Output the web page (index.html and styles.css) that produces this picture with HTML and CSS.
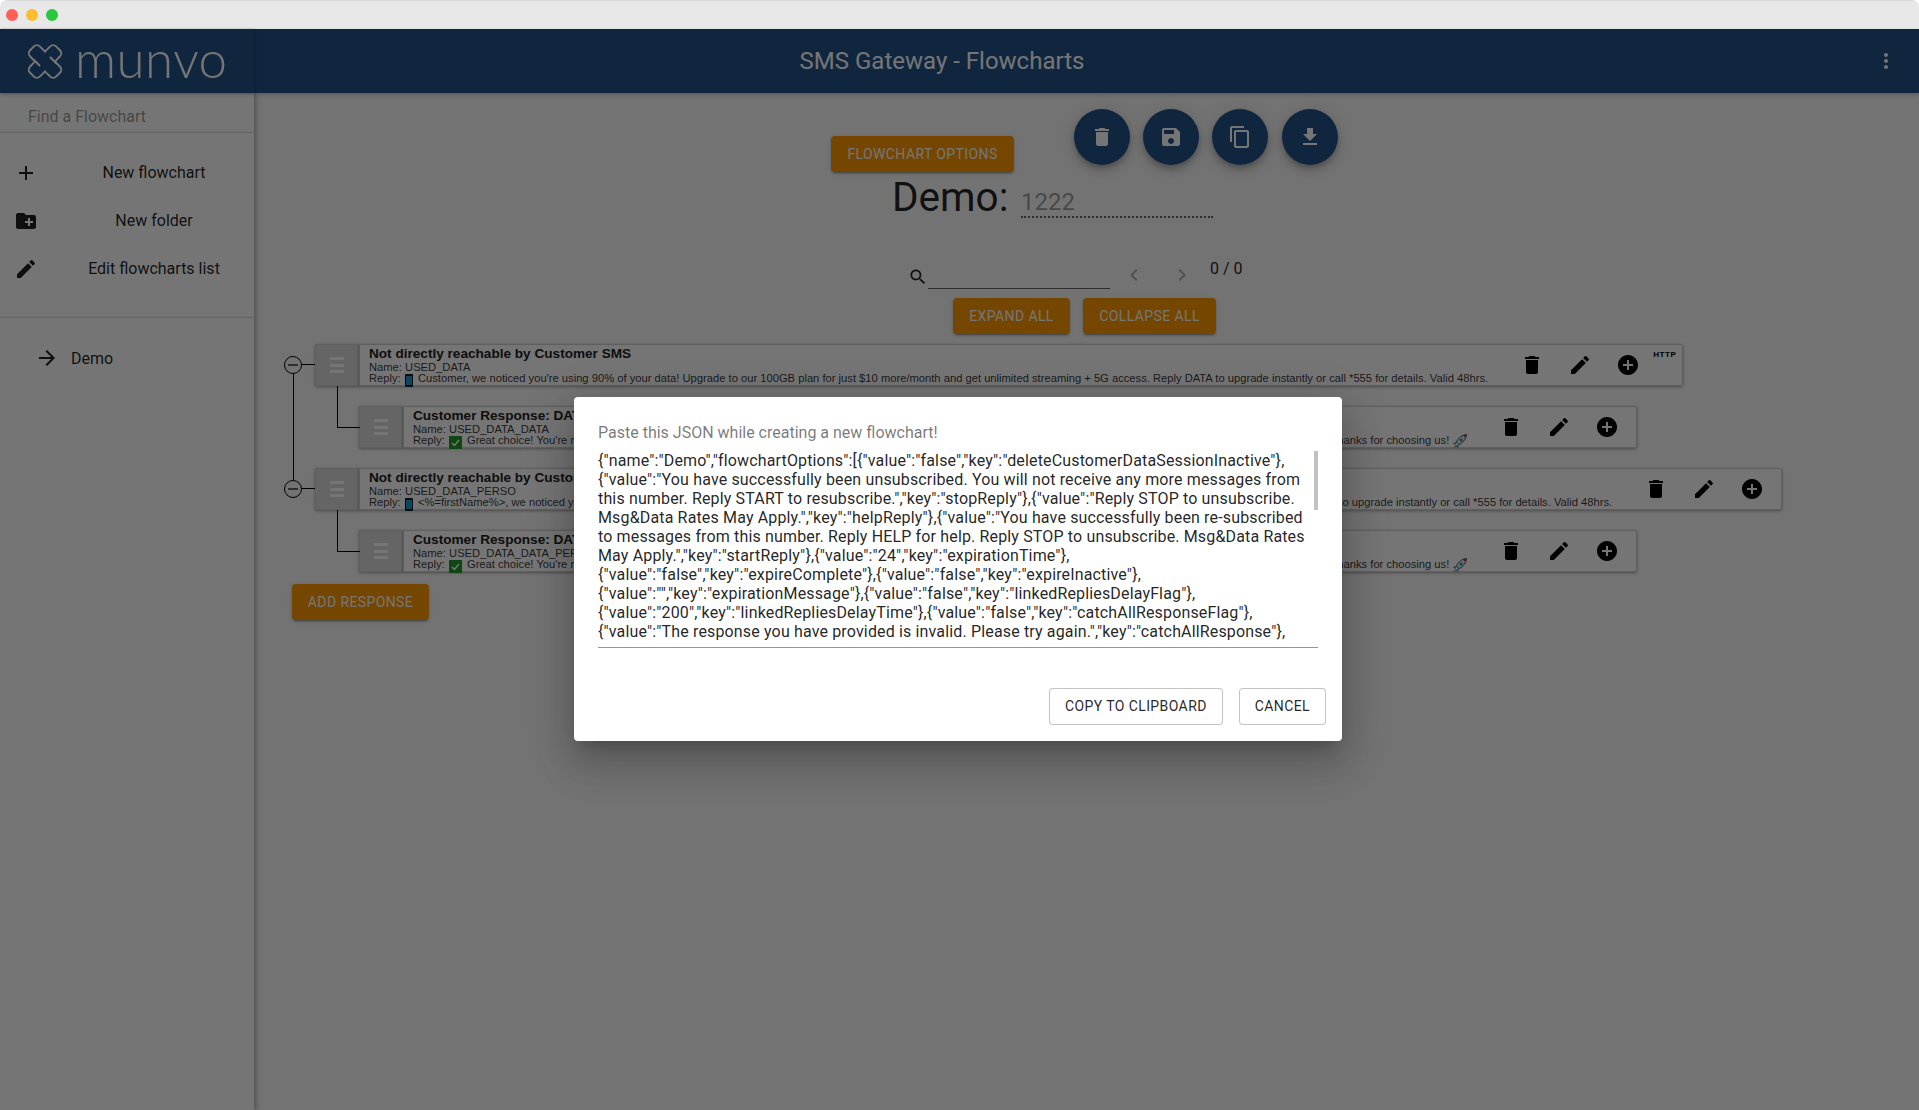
FILE: index.html
```html
<!DOCTYPE html>
<html lang="en">
<head>
<meta charset="utf-8">
<title>SMS Gateway - Flowcharts</title>
<link rel="stylesheet" href="styles.css">
</head>
<body>
<div class="titlebar">
  <span class="dot dot-red"></span><span class="dot dot-yellow"></span><span class="dot dot-green"></span>
</div>
<div class="app">
  <header class="header">
    <div class="brand">
      <svg class="brand-mark" viewBox="0 0 36 37">
        <g fill="none" stroke="#fff" stroke-width="2">
          <rect x="11" y="0" width="14" height="37" rx="4.500" transform="rotate(45 18 18.500)"/>
          <rect x="11" y="0" width="14" height="37" rx="4.500" transform="rotate(-45 18 18.500)"/>
        </g>
        <path d="M10.500 11L25.500 26M25.500 11L10.500 26" fill="none" stroke="#235389" stroke-width="12"/>
        <path d="M6.500 16.500L12.500 22.500M29.500 20.500L23.500 14.500" fill="none" stroke="#fff" stroke-width="2" stroke-linecap="round"/>
      </svg>
      <span class="wordmark">munvo</span>
    </div>
    <h1 class="header-title">SMS Gateway - Flowcharts</h1>
    <div class="header-actions">
      <svg class="icon icon-white" viewBox="0 0 24 24"><path d="M12 8c1.100 0 2-.9 2-2s-.9-2-2-2-2 .9-2 2 .9 2 2 2zm0 2c-1.100 0-2 .9-2 2s.9 2 2 2 2-.9 2-2-.9-2-2-2zm0 6c-1.100 0-2 .9-2 2s.9 2 2 2 2-.9 2-2-.9-2-2-2z"/></svg>
    </div>
  </header>
  <div class="body">
    <aside class="sidebar">
      <div class="find"><input class="find-input" type="text" placeholder="Find a Flowchart"></div>
      <nav class="side-menu">
        <div class="side-item">
          <svg class="icon" viewBox="0 0 24 24"><path d="M19 13h-6v6h-2v-6H5v-2h6V5h2v6h6v2z"/></svg>
          <span class="side-label">New flowchart</span>
        </div>
        <div class="side-item">
          <svg class="icon" viewBox="0 0 24 24"><path d="M20 6h-8l-2-2H4c-1.110 0-1.990.89-1.990 2L2 18c0 1.110.89 2 2 2h16c1.110 0 2-.89 2-2V8c0-1.110-.89-2-2-2zm-1 8h-3v3h-2v-3h-3v-2h3V9h2v3h3v2z"/></svg>
          <span class="side-label">New folder</span>
        </div>
        <div class="side-item">
          <svg class="icon" viewBox="0 0 24 24"><path d="M3 17.250V21h3.750L17.810 9.940l-3.750-3.750L3 17.250zM20.710 7.040c.39-.39.39-1.020 0-1.410l-2.340-2.340c-.39-.39-1.020-.39-1.410 0l-1.830 1.830 3.750 3.750 1.830-1.830z"/></svg>
          <span class="side-label">Edit flowcharts list</span>
        </div>
      </nav>
      <div class="side-list">
        <div class="side-entry">
          <svg class="icon" viewBox="0 0 24 24"><path d="M12 4l-1.410 1.410L16.170 11H4v2h12.170l-5.580 5.590L12 20l8-8z"/></svg>
          <span>Demo</span>
        </div>
      </div>
    </aside>
    <main class="main">
      <div class="toolbar">
        <button class="btn btn-options">Flowchart options</button>
        <div class="fabs">
          <span class="fab"><svg class="icon icon-white" viewBox="0 0 24 24"><path d="M6 19c0 1.100.9 2 2 2h8c1.100 0 2-.9 2-2V7H6v12zM19 4h-3.500l-1-1h-5l-1 1H5v2h14V4z"/></svg></span>
          <span class="fab"><svg class="icon icon-white" viewBox="0 0 24 24"><path d="M17 3H5c-1.110 0-2 .9-2 2v14c0 1.100.89 2 2 2h14c1.100 0 2-.9 2-2V7l-4-4zm-5 16c-1.660 0-3-1.340-3-3s1.340-3 3-3 3 1.340 3 3-1.340 3-3 3zm3-10H5V5h10v4z"/></svg></span>
          <span class="fab"><svg class="icon icon-white" viewBox="0 0 24 24"><path d="M16 1H4c-1.100 0-2 .9-2 2v14h2V3h12V1zm3 4H8c-1.100 0-2 .9-2 2v14c0 1.100.9 2 2 2h11c1.100 0 2-.9 2-2V7c0-1.100-.9-2-2-2zm0 16H8V7h11v14z"/></svg></span>
          <span class="fab"><svg class="icon icon-white" viewBox="0 0 24 24"><path d="M19 9h-4V3H9v6H5l7 7 7-7zM5 18v2h14v-2H5z"/></svg></span>
        </div>
      </div>
      <div class="name-row">
        <span class="name-label">Demo:</span>
        <span class="name-value">1222</span>
      </div>
      <div class="search-row">
        <svg class="icon icon-search" viewBox="0 0 24 24"><path d="M15.500 14h-.79l-.28-.27C15.410 12.590 16 11.110 16 9.500 16 5.910 13.090 3 9.500 3S3 5.910 3 9.500 5.910 16 9.500 16c1.610 0 3.090-.59 4.230-1.570l.27.28v.79l5 4.990L20.490 19l-4.990-5zm-6 0C7.010 14 5 11.990 5 9.500S7.010 5 9.500 5 14 7.010 14 9.500 11.990 14 9.500 14z"/></svg>
        <input class="search-input" type="text">
        <svg class="icon icon-chevron" viewBox="0 0 24 24"><path d="M15.410 7.410L14 6l-6 6 6 6 1.410-1.410L10.830 12z"/></svg>
        <svg class="icon icon-chevron" viewBox="0 0 24 24"><path d="M8.590 16.590L10 18l6-6-6-6-1.410 1.410L13.170 12z"/></svg>
        <span class="search-count">0 / 0</span>
      </div>
      <div class="expand-row">
        <button class="btn btn-expand">Expand all</button>
        <button class="btn btn-collapse">Collapse all</button>
      </div>
      <div class="tree">
        <div class="node node-top node-first">
          <span class="toggle"><span class="toggle-bar"></span></span>
          <div class="handle"><span></span><span></span><span></span></div>
          <div class="card">
            <div class="card-text">
              <div class="card-title">Not directly reachable by Customer SMS</div>
              <div class="card-line">Name: USED_DATA</div>
              <div class="card-line">Reply: <svg class="emoji-phone" viewBox="0 0 8 13"><rect width="8" height="13" rx="1" fill="#0d1a24"/><rect x="1" y="2" width="6" height="9" fill="#1f97c9"/></svg> Customer, we noticed you're using 90% of your data! Upgrade to our 100GB plan for just $10 more/month and get unlimited streaming + 5G access. Reply DATA to upgrade instantly or call *555 for details. Valid 48hrs.</div>
            </div>
            <div class="card-actions">
              <svg class="icon action" viewBox="0 0 24 24"><path d="M6 19c0 1.100.9 2 2 2h8c1.100 0 2-.9 2-2V7H6v12zM19 4h-3.500l-1-1h-5l-1 1H5v2h14V4z"/></svg>
              <svg class="icon action" viewBox="0 0 24 24"><path d="M3 17.250V21h3.750L17.810 9.940l-3.750-3.750L3 17.250zM20.710 7.040c.39-.39.39-1.020 0-1.410l-2.340-2.340c-.39-.39-1.020-.39-1.410 0l-1.830 1.830 3.750 3.750 1.830-1.830z"/></svg>
              <svg class="icon action" viewBox="0 0 24 24"><path d="M12 2C6.480 2 2 6.480 2 12s4.480 10 10 10 10-4.480 10-10S17.520 2 12 2zm5 11h-4v4h-2v-4H7v-2h4V7h2v4h4v2z"/></svg>
            </div>
            <span class="http">HTTP</span>
          </div>
        </div>
        <div class="node node-child">
          <div class="handle"><span></span><span></span><span></span></div>
          <div class="card">
            <div class="card-text">
              <div class="card-title">Customer Response: DATA</div>
              <div class="card-line">Name: USED_DATA_DATA</div>
              <div class="card-line">Reply: <svg class="emoji-check" viewBox="0 0 13 13"><rect width="13" height="13" fill="#1f9c25"/><path d="M3 7l2.500 2.500L10 4" fill="none" stroke="#fff" stroke-width="1.500"/></svg> Great choice! You're now upgraded to our 100GB plan at $10 more/month with unlimited streaming + 5G access. Your new plan is active now and will appear on your next bill. Thanks for choosing us! <svg class="emoji-rocket" viewBox="0 0 14 14"><path d="M13.500.5c-4 .3-7.500 3-9.500 7l2.500 2.500c4-2 6.700-5.500 7-9.500z" fill="#e4e8ec" stroke="#27404f" stroke-width=".8"/><path d="M13.500.5l-3.300.8 2.500 2.500z" fill="#e0243f"/><circle cx="8.500" cy="5.500" r="1.400" fill="#2a93c9"/><path d="M4 7.500L.8 8.500 3 10.500zM6.500 10l-1 3.200-2-2.200z" fill="#2a93c9"/><path d="M3.300 10.300L.7 13.500l3.300-1z" fill="#f09a1e"/></svg></div>
            </div>
            <div class="card-actions">
              <svg class="icon action" viewBox="0 0 24 24"><path d="M6 19c0 1.100.9 2 2 2h8c1.100 0 2-.9 2-2V7H6v12zM19 4h-3.500l-1-1h-5l-1 1H5v2h14V4z"/></svg>
              <svg class="icon action" viewBox="0 0 24 24"><path d="M3 17.250V21h3.750L17.810 9.940l-3.750-3.750L3 17.250zM20.710 7.040c.39-.39.39-1.020 0-1.410l-2.340-2.340c-.39-.39-1.020-.39-1.410 0l-1.830 1.830 3.750 3.750 1.830-1.830z"/></svg>
              <svg class="icon action" viewBox="0 0 24 24"><path d="M12 2C6.480 2 2 6.480 2 12s4.480 10 10 10 10-4.480 10-10S17.520 2 12 2zm5 11h-4v4h-2v-4H7v-2h4V7h2v4h4v2z"/></svg>
            </div>
          </div>
        </div>
        <div class="node node-top">
          <span class="toggle"><span class="toggle-bar"></span></span>
          <div class="handle"><span></span><span></span><span></span></div>
          <div class="card">
            <div class="card-text">
              <div class="card-title">Not directly reachable by Customer SMS</div>
              <div class="card-line">Name: USED_DATA_PERSO</div>
              <div class="card-line">Reply: <svg class="emoji-phone" viewBox="0 0 8 13"><rect width="8" height="13" rx="1" fill="#0d1a24"/><rect x="1" y="2" width="6" height="9" fill="#1f97c9"/></svg> &lt;%=firstName%&gt;, we noticed you're using 90% of your monthly data balance! Upgrade to our 100GB plan for just $10 more/month and get unlimited streaming + 5G access. Reply DATA to upgrade instantly or call *555 for details. Valid 48hrs.</div>
            </div>
            <div class="card-actions">
              <svg class="icon action" viewBox="0 0 24 24"><path d="M6 19c0 1.100.9 2 2 2h8c1.100 0 2-.9 2-2V7H6v12zM19 4h-3.500l-1-1h-5l-1 1H5v2h14V4z"/></svg>
              <svg class="icon action" viewBox="0 0 24 24"><path d="M3 17.250V21h3.750L17.810 9.940l-3.750-3.750L3 17.250zM20.710 7.040c.39-.39.39-1.020 0-1.410l-2.340-2.340c-.39-.39-1.020-.39-1.410 0l-1.830 1.830 3.750 3.750 1.830-1.830z"/></svg>
              <svg class="icon action" viewBox="0 0 24 24"><path d="M12 2C6.480 2 2 6.480 2 12s4.480 10 10 10 10-4.480 10-10S17.520 2 12 2zm5 11h-4v4h-2v-4H7v-2h4V7h2v4h4v2z"/></svg>
            </div>
          </div>
        </div>
        <div class="node node-child">
          <div class="handle"><span></span><span></span><span></span></div>
          <div class="card">
            <div class="card-text">
              <div class="card-title">Customer Response: DATA</div>
              <div class="card-line">Name: USED_DATA_DATA_PERSO</div>
              <div class="card-line">Reply: <svg class="emoji-check" viewBox="0 0 13 13"><rect width="13" height="13" fill="#1f9c25"/><path d="M3 7l2.500 2.500L10 4" fill="none" stroke="#fff" stroke-width="1.500"/></svg> Great choice! You're now upgraded to our 100GB plan at $10 more/month with unlimited streaming + 5G access. Your new plan is active now and will appear on your next bill. Thanks for choosing us! <svg class="emoji-rocket" viewBox="0 0 14 14"><path d="M13.500.5c-4 .3-7.500 3-9.500 7l2.500 2.500c4-2 6.700-5.500 7-9.500z" fill="#e4e8ec" stroke="#27404f" stroke-width=".8"/><path d="M13.500.5l-3.300.8 2.500 2.500z" fill="#e0243f"/><circle cx="8.500" cy="5.500" r="1.400" fill="#2a93c9"/><path d="M4 7.500L.8 8.500 3 10.500zM6.500 10l-1 3.200-2-2.200z" fill="#2a93c9"/><path d="M3.300 10.300L.7 13.500l3.300-1z" fill="#f09a1e"/></svg></div>
            </div>
            <div class="card-actions">
              <svg class="icon action" viewBox="0 0 24 24"><path d="M6 19c0 1.100.9 2 2 2h8c1.100 0 2-.9 2-2V7H6v12zM19 4h-3.500l-1-1h-5l-1 1H5v2h14V4z"/></svg>
              <svg class="icon action" viewBox="0 0 24 24"><path d="M3 17.250V21h3.750L17.810 9.940l-3.750-3.750L3 17.250zM20.710 7.040c.39-.39.39-1.020 0-1.410l-2.340-2.340c-.39-.39-1.020-.39-1.410 0l-1.830 1.830 3.750 3.750 1.830-1.830z"/></svg>
              <svg class="icon action" viewBox="0 0 24 24"><path d="M12 2C6.480 2 2 6.480 2 12s4.480 10 10 10 10-4.480 10-10S17.520 2 12 2zm5 11h-4v4h-2v-4H7v-2h4V7h2v4h4v2z"/></svg>
            </div>
          </div>
        </div>
        <button class="btn btn-add">Add response</button>
      </div>
    </main>
  </div>
  <div class="scrim">
    <div class="dialog">
      <div class="dialog-title">Paste this JSON while creating a new flowchart!</div>
      <div class="json-box">
        <div class="json-text">{"name":"Demo","flowchartOptions":[{"value":"false","key":"deleteCustomerDataSessionInactive"},<br>{"value":"You have successfully been unsubscribed. You will not receive any more messages from<br>this number. Reply START to resubscribe.","key":"stopReply"},{"value":"Reply STOP to unsubscribe.<br>Msg&amp;Data Rates May Apply.","key":"helpReply"},{"value":"You have successfully been re-subscribed<br>to messages from this number. Reply HELP for help. Reply STOP to unsubscribe. Msg&amp;Data Rates<br>May Apply.","key":"startReply"},{"value":"24","key":"expirationTime"},<br>{"value":"false","key":"expireComplete"},{"value":"false","key":"expireInactive"},<br>{"value":"","key":"expirationMessage"},{"value":"false","key":"linkedRepliesDelayFlag"},<br>{"value":"200","key":"linkedRepliesDelayTime"},{"value":"false","key":"catchAllResponseFlag"},<br>{"value":"The response you have provided is invalid. Please try again.","key":"catchAllResponse"},</div>
        <span class="json-thumb"></span>
      </div>
      <div class="dialog-actions">
        <button class="btn-outline">Copy to clipboard</button>
        <button class="btn-outline">Cancel</button>
      </div>
    </div>
  </div>
</div>
</body>
</html>
```

FILE: styles.css
```css
* { box-sizing: border-box; }
html, body { margin: 0; height: 100%; }
body {
  background: #fff;
  font-family: Roboto, "Liberation Sans", sans-serif;
  color: rgba(0,0,0,.87);
  overflow: hidden;
}

.titlebar {
  height: 29px;
  background: #e8e8e8;
  border-top: 1px solid #d8d8d8;
  border-radius: 8px 8px 0 0;
  display: flex;
  align-items: center;
  gap: 8px;
  padding: 0 0 0 6px;
}
.dot { width: 12px; height: 12px; border-radius: 50%; }
.dot-red { background: #ff5f57; }
.dot-yellow { background: #febc2e; }
.dot-green { background: #28c840; }

.app { position: relative; height: 1081px; display: flex; flex-direction: column; }

.header {
  height: 64px;
  background: #235389;
  display: flex;
  align-items: center;
  color: #fff;
  flex: none;
  position: relative;
  z-index: 2;
  box-shadow: 0 2px 4px rgba(0,0,0,.2);
}
.brand {
  width: 254px;
  height: 100%;
  display: flex;
  align-items: center;
  padding-left: 27px;
  box-shadow: 1px 0 2px rgba(0,0,0,.25);
}
.brand-mark { width: 36px; height: 37px; flex: none; }
.wordmark {
  font-family: Lato, sans-serif;
  font-weight: 300;
  font-size: 51px;
  line-height: 1;
  margin: -6px 0 0 12px;
  color: #fff;
  letter-spacing: .5px;
}
.header-title {
  flex: 1;
  margin: 0;
  font-size: 24px;
  font-weight: 400;
  text-align: center;
}
.header-actions { width: 289px; display: flex; justify-content: flex-end; padding-right: 21px; }

.icon { width: 24px; height: 24px; fill: rgba(0,0,0,.87); flex: none; display: block; }
.icon-white { fill: #fff; }

.body { flex: 1; display: flex; min-height: 0; }

.sidebar {
  width: 254px;
  flex: none;
  background: #fff;
  box-shadow: 2px 0 5px rgba(0,0,0,.3);
  position: relative;
  z-index: 1;
}
.find { height: 40px; border-bottom: 1px solid #d9d9d9; padding-left: 28px; display: flex; align-items: center; }
.find-input {
  border: 0; outline: 0; background: none; padding: 0; width: 200px;
  font: 16px Roboto, sans-serif;
  margin-top: 8px;
}
.find-input::placeholder { color: rgba(0,0,0,.42); opacity: 1; }
.side-menu { padding: 16px 0 24px; border-bottom: 1px solid #d9d9d9; }
.side-item { height: 48px; display: flex; align-items: center; padding-left: 14px; }
.side-label { flex: 1; text-align: center; margin: -1px 0 0 18px; padding-right: 2px; font-size: 16px; }
.side-list { padding-top: 16px; }
.side-entry { height: 48px; display: flex; align-items: center; padding-left: 35px; gap: 12px; font-size: 16px; }

.main { flex: 1; min-width: 0; background: #fafafa; padding-top: 16px; }
.toolbar { display: flex; align-items: flex-start; padding-left: 577px; height: 56px; }
.btn {
  border: 0;
  border-radius: 4px;
  background: #ff9800;
  color: #fff;
  font: 400 14px/1.75 Roboto, sans-serif;
  letter-spacing: .4px;
  text-transform: uppercase;
  height: 36px;
  padding: 0 16px;
  box-shadow: 0 3px 1px -2px rgba(0,0,0,.2), 0 2px 2px rgba(0,0,0,.14), 0 1px 5px rgba(0,0,0,.12);
  white-space: nowrap;
}
.btn-options { margin-top: 27px; width: 183px; padding: 0; }
.fabs { display: flex; gap: 13px; margin-left: 60px; }
.fab:last-child { margin-left: 1px; }
.fab {
  width: 56px; height: 56px; border-radius: 50%;
  background: #235389;
  display: flex; align-items: center; justify-content: center;
  box-shadow: 0 3px 5px -1px rgba(0,0,0,.2), 0 6px 10px rgba(0,0,0,.14), 0 1px 18px rgba(0,0,0,.12);
}

.name-row { display: flex; align-items: flex-end; margin: 8px 0 0 638px; height: 45px; }
.name-label { font-size: 40.500px; line-height: 46px; width: 129px; flex: none; position: relative; top: 2px; }
.name-value {
  width: 192px; height: 38px;
  font-size: 24px; line-height: 44px; color: rgba(0,0,0,.38);
  border-bottom: 2px dotted rgba(0,0,0,.6);
}

.search-row { display: flex; align-items: flex-start; margin: 44px 0 0 655px; height: 36px; }
.icon-search { width: 20px; height: 20px; margin: 5px 0 0 -1px; }
.search-input {
  width: 182px; height: 27px; margin-left: 0;
  border: 0; border-bottom: 1px solid rgba(0,0,0,.6); background: none; outline: 0; padding: 0;
}
.icon-chevron { width: 24px; height: 24px; fill: rgba(0,0,0,.3); margin: 1px 0 0 12px; }
.icon-chevron + .icon-chevron { margin-left: 24px; }
.search-count { font-size: 16px; margin: -3px 0 0 16px; line-height: 19px; }

.expand-row { display: flex; gap: 13px; margin-left: 699px; }
.btn-expand { width: 117px; padding: 0; }
.btn-collapse { width: 133px; padding: 0; }

.tree { margin: 10px 0 0 61px; }
.node { position: relative; display: flex; width: fit-content; height: 42px; margin-bottom: 20px; }
.node-child { margin-left: 44px; }
.node-child::before {
  content: "";
  position: absolute;
  left: -22px; top: -20px;
  width: 22px; height: 41px;
  border-left: 1.500px solid #000;
  border-bottom: 1.500px solid #000;
}
.node-first::after {
  content: "";
  position: absolute;
  left: -22px; top: 30px;
  height: 106px;
  border-left: 1.500px solid #000;
}
.toggle {
  position: absolute;
  left: -31px; top: 12px;
  width: 18px; height: 18px;
  border: 1.500px solid #000;
  border-radius: 50%;
  display: flex; align-items: center; justify-content: center;
}
.toggle::after {
  content: "";
  position: absolute;
  left: 16px; top: 6.500px;
  width: 14px;
  border-top: 1.500px solid #000;
}
.toggle-bar { width: 10px; height: 2px; background: #666; }
.handle {
  width: 44px; flex: none;
  background: #dddddd;
  border: 1px solid #cfcfcf;
  box-shadow: 0 1px 3px rgba(0,0,0,.35);
  display: flex; flex-direction: column; align-items: center; justify-content: center; gap: 3.500px;
}
.handle span { width: 14px; height: 3px; background: #fff; }
.card {
  display: flex;
  background: #fff;
  border: 1px solid #d0d0d0;
  border-radius: 0 2px 2px 0;
  box-shadow: 0 1px 3px rgba(0,0,0,.35);
  font-family: "Liberation Sans", Arial, sans-serif;
  position: relative;
}
.card-text { padding: 1px 0 0 9px; white-space: nowrap; color: rgba(0,0,0,.8); }
.card-title { font-size: 13.600px; font-weight: 700; line-height: 16px; color: #222; }
.card-line { font-size: 11.200px; line-height: 11px; }
.card-actions { display: flex; align-items: center; padding: 0 17px 0 32px; }
.action { width: 24px; height: 24px; margin-right: 24px; fill: #000; }
.action:last-child { margin-right: 0; }
.http { font-size: 8px; font-weight: 700; letter-spacing: .6px; line-height: 9px; margin: 5px 6px 0 -4px; color: #000; }

.emoji-phone { width: 8px; height: 13px; margin: -2px 2px -3px 1px; vertical-align: -2px; }
.emoji-check { width: 13px; height: 13px; margin: -2px 2px -3px 1px; vertical-align: -2px; }
.emoji-rocket { width: 15px; height: 15px; margin: -3px 0 -3px 0; vertical-align: -2px; }

.btn-add { width: 137px; padding: 0; margin: -10px 0 0 -23px; height: 36px; background: #ff9800; }

.scrim {
  position: absolute; inset: 0;
  z-index: 5;
  background: rgba(0,0,0,.54);
  display: flex; align-items: center; justify-content: center;
  padding: 0 3px 2px 0;
}
.dialog {
  width: 768px; height: 344px;
  background: #fff;
  border-radius: 4px;
  padding: 24px 24px 16px;
  box-shadow: 0 11px 15px -7px rgba(0,0,0,.2), 0 24px 38px 3px rgba(0,0,0,.14), 0 9px 46px 8px rgba(0,0,0,.12);
  display: flex; flex-direction: column;
}
.dialog-title { font-size: 16px; line-height: 24px; color: rgba(0,0,0,.54); margin-bottom: 6px; }
.json-box {
  position: relative;
  height: 197px;
  border-bottom: 1px solid rgba(0,0,0,.42);
  overflow: hidden;
}
.json-text { font-size: 16px; line-height: 19px; white-space: nowrap; letter-spacing: .15px; }
.json-thumb { position: absolute; right: 0; top: 0; width: 4px; height: 59px; background: #c1c1c1; }
.dialog-actions { display: flex; justify-content: flex-end; gap: 16px; padding: 40px 0 0; margin-right: -8px; }
.btn-outline {
  height: 37px;
  padding: 0 15px;
  background: #fff;
  border: 1px solid rgba(0,0,0,.23);
  border-radius: 4px;
  font: 400 14px/1.75 Roboto, sans-serif;
  letter-spacing: .4px;
  text-transform: uppercase;
  color: rgba(0,0,0,.87);
}
```
